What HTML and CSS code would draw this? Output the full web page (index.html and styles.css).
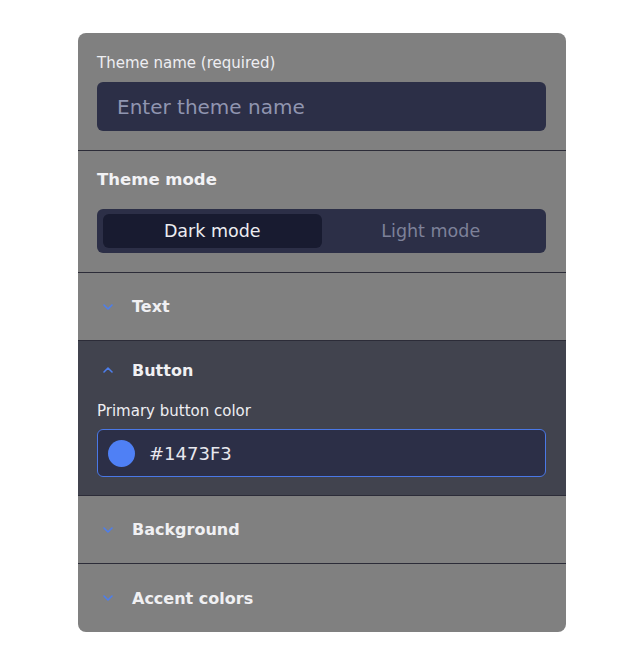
FILE: index.html
```html
<!DOCTYPE html>
<html lang="en">
<head>
<meta charset="utf-8">
<title>Theme editor</title>
<link rel="stylesheet" href="styles.css">
</head>
<body>
<div class="card">
  <div class="section name-section">
    <label class="field-label" for="theme-name">Theme name (required)</label>
    <input id="theme-name" class="text-input" type="text" placeholder="Enter theme name">
  </div>
  <div class="section mode-section">
    <div class="section-title">Theme mode</div>
    <div class="toggle">
      <button class="seg seg-active">Dark mode</button>
      <button class="seg">Light mode</button>
    </div>
  </div>
  <div class="acc-row">
    <svg class="chev" width="10" height="6" viewBox="0 0 10 6"><path d="M1 1l4 4 4-4" fill="none" stroke="#4d7eec" stroke-width="1.6" stroke-linecap="round" stroke-linejoin="round"/></svg>
    <span class="acc-title">Text</span>
  </div>
  <div class="acc-open">
    <div class="acc-head">
      <svg class="chev" width="10" height="6" viewBox="0 0 10 6"><path d="M1 5l4-4 4 4" fill="none" stroke="#4d7eec" stroke-width="1.6" stroke-linecap="round" stroke-linejoin="round"/></svg>
      <span class="acc-title">Button</span>
    </div>
    <div class="field-label small-gap">Primary button color</div>
    <div class="color-input">
      <span class="swatch"></span>
      <span class="hex">#1473F3</span>
    </div>
  </div>
  <div class="acc-row">
    <svg class="chev" width="10" height="6" viewBox="0 0 10 6"><path d="M1 1l4 4 4-4" fill="none" stroke="#4d7eec" stroke-width="1.6" stroke-linecap="round" stroke-linejoin="round"/></svg>
    <span class="acc-title">Background</span>
  </div>
  <div class="acc-row last">
    <svg class="chev" width="10" height="6" viewBox="0 0 10 6"><path d="M1 1l4 4 4-4" fill="none" stroke="#4d7eec" stroke-width="1.6" stroke-linecap="round" stroke-linejoin="round"/></svg>
    <span class="acc-title">Accent colors</span>
  </div>
</div>
</body>
</html>
```
FILE: styles.css
```css
* { box-sizing: border-box; }
html, body { margin: 0; padding: 0; background: #ffffff; }
body {
  font-family: "DejaVu Sans", "Noto Sans", sans-serif;
  color: #ececf0;
}
.card {
  width: 488px;
  margin: 33px auto 0;
  background: #808080;
  border-radius: 8px;
  overflow: hidden;
}
.section {
  padding: 21px 20px 19px 19px;
  border-bottom: 1px solid #2c2c38;
}
.field-label {
  display: block;
  font-size: 15px;
  line-height: 18px;
  color: #eeeef2;
  margin-bottom: 10px;
}
.text-input {
  display: block;
  width: 100%;
  height: 49px;
  border: none;
  border-radius: 6px;
  background: #2c2f47;
  padding: 0 20px;
  font-family: inherit;
  font-size: 20px;
  color: #eeeef2;
  outline: none;
}
.text-input::placeholder { color: #9095b0; }
.mode-section { padding-top: 19px; }
.section-title {
  font-size: 16.5px;
  font-weight: bold;
  line-height: 20px;
  color: #f2f2f5;
  margin-bottom: 19px;
}
.toggle {
  display: flex;
  height: 44px;
  padding: 5px 6px;
  border-radius: 6px;
  background: #2c2f47;
}
.seg {
  flex: 1;
  border: none;
  background: transparent;
  border-radius: 6px;
  font-family: inherit;
  font-size: 17.5px;
  color: #7d8199;
  padding: 0;
}
.seg-active {
  background: #181b30;
  color: #ececf0;
}
.acc-row {
  display: flex;
  align-items: center;
  height: 68px;
  padding: 0 19px 0 25px;
  border-bottom: 1px solid #2c2c38;
}
.acc-row.last { border-bottom: none; }
.chev { flex: none; margin-right: 19px; }
.acc-title {
  font-size: 16px;
  font-weight: bold;
  color: #f0f0f3;
}
.acc-open {
  background: #41434e;
  padding: 19px 20px 18px 19px;
  border-bottom: 1px solid #2c2c38;
}
.acc-head {
  display: flex;
  align-items: center;
  height: 20px;
  padding-left: 6px;
  margin-bottom: 22px;
}
.small-gap { margin-bottom: 9px; }
.color-input {
  display: flex;
  align-items: center;
  height: 48px;
  border: 1px solid #4a78e6;
  border-radius: 6px;
  background: #2c2f47;
  padding: 0 10px;
}
.swatch {
  width: 27px;
  height: 27px;
  border-radius: 50%;
  background: #4f80f5;
  margin-right: 14px;
}
.hex {
  font-size: 18px;
  color: #e8e8ee;
}
```
